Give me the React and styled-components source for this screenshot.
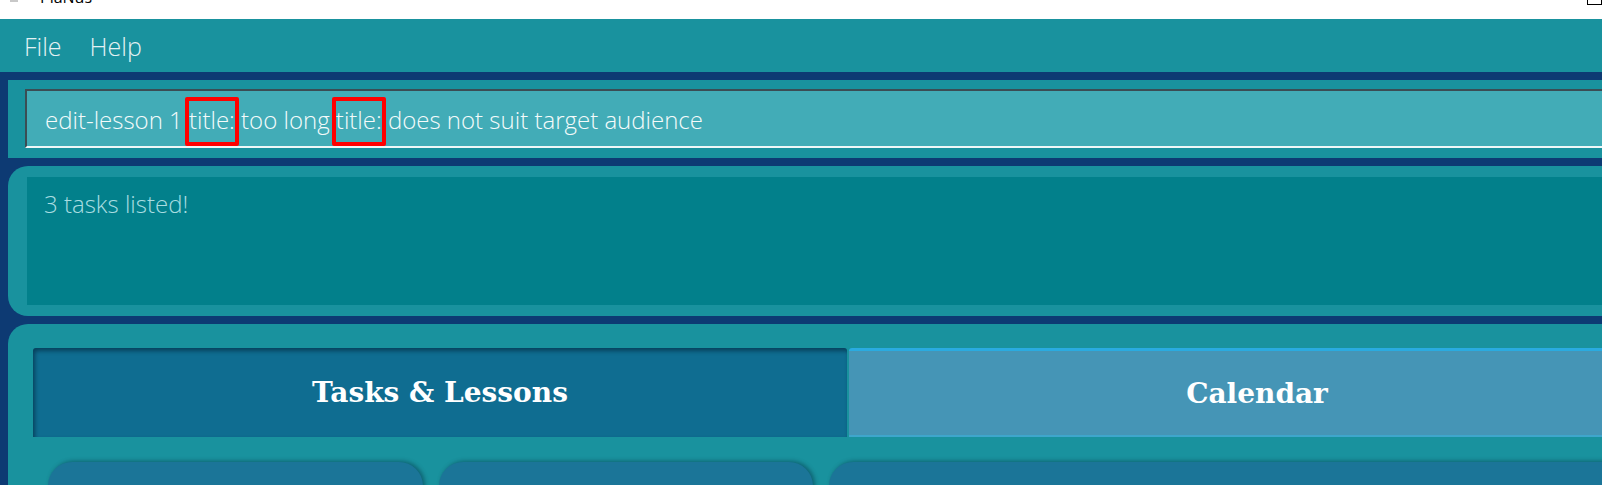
import React from 'react';
import styled, { createGlobalStyle } from 'styled-components';

const GlobalStyle = createGlobalStyle`
  html, body {
    margin: 0;
    padding: 0;
    overflow: hidden;
    background: #0d3a73;
  }
`;

const Window = styled.div`
  width: 1700px;
  font-family: "Open Sans", "Noto Sans", sans-serif;
`;

const TitleBar = styled.div`
  width: 100vw;
  height: 19px;
  background: #ffffff;
  display: flex;
  align-items: flex-start;
  overflow: hidden;
`;

const AppIcon = styled.div`
  width: 8px;
  height: 8px;
  margin: -6px 0 0 10px;
  background: #c8c8c8;
`;

const TitleText = styled.span`
  margin: -13px 0 0 22px;
  font-family: "Open Sans", sans-serif;
  font-size: 16px;
  line-height: 20px;
  color: #000;
`;

const MaxBox = styled.div`
  width: 13px;
  height: 12px;
  margin: -9px 0 0 auto;
  border: 1px solid #000;
  flex-shrink: 0;
`;

const MenuBar = styled.div`
  height: 53px;
  background: #19929e;
  display: flex;
  align-items: center;
  gap: 28px;
  padding-left: 24px;
`;

const MenuItem = styled.span`
  font-size: 25px;
  font-weight: 300;
  color: #e3f1f3;
`;

const Body = styled.div`
  padding: 8px 0 0 8px;
  display: flex;
  flex-direction: column;
  gap: 8px;
`;

const CommandPanel = styled.div`
  height: 78px;
  box-sizing: border-box;
  background: #19929e;
  padding: 9px 0 10px 17px;
`;

const CommandField = styled.div`
  height: 100%;
  box-sizing: border-box;
  background: #42acb7;
  border-top: 2px solid #3b4d54;
  border-left: 2px solid #3b4d54;
  border-bottom: 2px solid #eef7f8;
  display: flex;
  align-items: center;
  padding: 2px 0 0 18px;
  font-size: 24px;
  font-weight: 300;
  color: #f4fbfb;
  white-space: pre;
`;

const Marked = styled.span`
  position: relative;
  &::after {
    content: "";
    position: absolute;
    left: -4px;
    right: -4px;
    top: -6px;
    bottom: -10px;
    border: 4px solid #ff0000;
    border-radius: 2px;
  }
`;

const ResultPanel = styled.div`
  height: 150px;
  box-sizing: border-box;
  background: #19929e;
  border-radius: 20px 0 0 20px;
  padding: 11px 0 11px 19px;
`;

const ResultArea = styled.div`
  height: 100%;
  background: #02808b;
  padding: 10px 0 0 17px;
  box-sizing: border-box;
  font-size: 24px;
  font-weight: 300;
  color: #a9dde1;
`;

const MainPanel = styled.div`
  height: 200px;
  background: #19929e;
  border-radius: 20px 0 0 0;
  padding: 24px 0 0 25px;
  width: 1665px;
  box-sizing: border-box;
`;

const TabHeader = styled.div`
  display: grid;
  grid-template-columns: 814px 816px;
  gap: 2px;
  height: 89px;
`;

const Tab = styled.div`
  display: flex;
  align-items: center;
  justify-content: center;
  box-sizing: border-box;
  border-radius: 3px 3px 0 0;
  font-family: "DejaVu Serif", serif;
  font-weight: bold;
  font-size: 28px;
  color: #ffffff;
  background: ${p => (p.$selected ? '#0f6d91' : '#4595b6')};
  box-shadow: ${p => (p.$selected ? 'inset 2px 3px 4px rgba(0, 30, 50, 0.55)' : 'none')};
  border-top: ${p => (p.$selected ? 'none' : '3px solid #2aabe0')};
  border-bottom: ${p => (p.$selected ? 'none' : '2px solid #3ea6cc')};
`;

const CardRow = styled.div`
  display: flex;
  gap: 16px;
  padding: 25px 0 0 15px;
`;

const Card = styled.div`
  width: ${p => p.$width}px;
  height: 60px;
  background: #1b7598;
  border-radius: 24px 24px 0 0;
  box-shadow: 2px -1px 4px rgba(0, 40, 60, 0.45);
`;

export default function App() {
  return (
    <>
      <GlobalStyle />
      <Window>
        <TitleBar>
          <AppIcon />
          <TitleText>PlaNus</TitleText>
          <MaxBox />
        </TitleBar>
        <MenuBar>
          <MenuItem>File</MenuItem>
          <MenuItem>Help</MenuItem>
        </MenuBar>
        <Body>
          <CommandPanel>
            <CommandField>
              edit-lesson 1 <Marked>title:</Marked> too long <Marked>title:</Marked> does not suit target audience
            </CommandField>
          </CommandPanel>
          <ResultPanel>
            <ResultArea>3 tasks listed!</ResultArea>
          </ResultPanel>
          <MainPanel>
            <TabHeader>
              <Tab $selected>Tasks &amp; Lessons</Tab>
              <Tab>Calendar</Tab>
            </TabHeader>
            <CardRow>
              <Card $width={375} />
              <Card $width={374} />
              <Card $width={820} />
            </CardRow>
          </MainPanel>
        </Body>
      </Window>
    </>
  );
}
